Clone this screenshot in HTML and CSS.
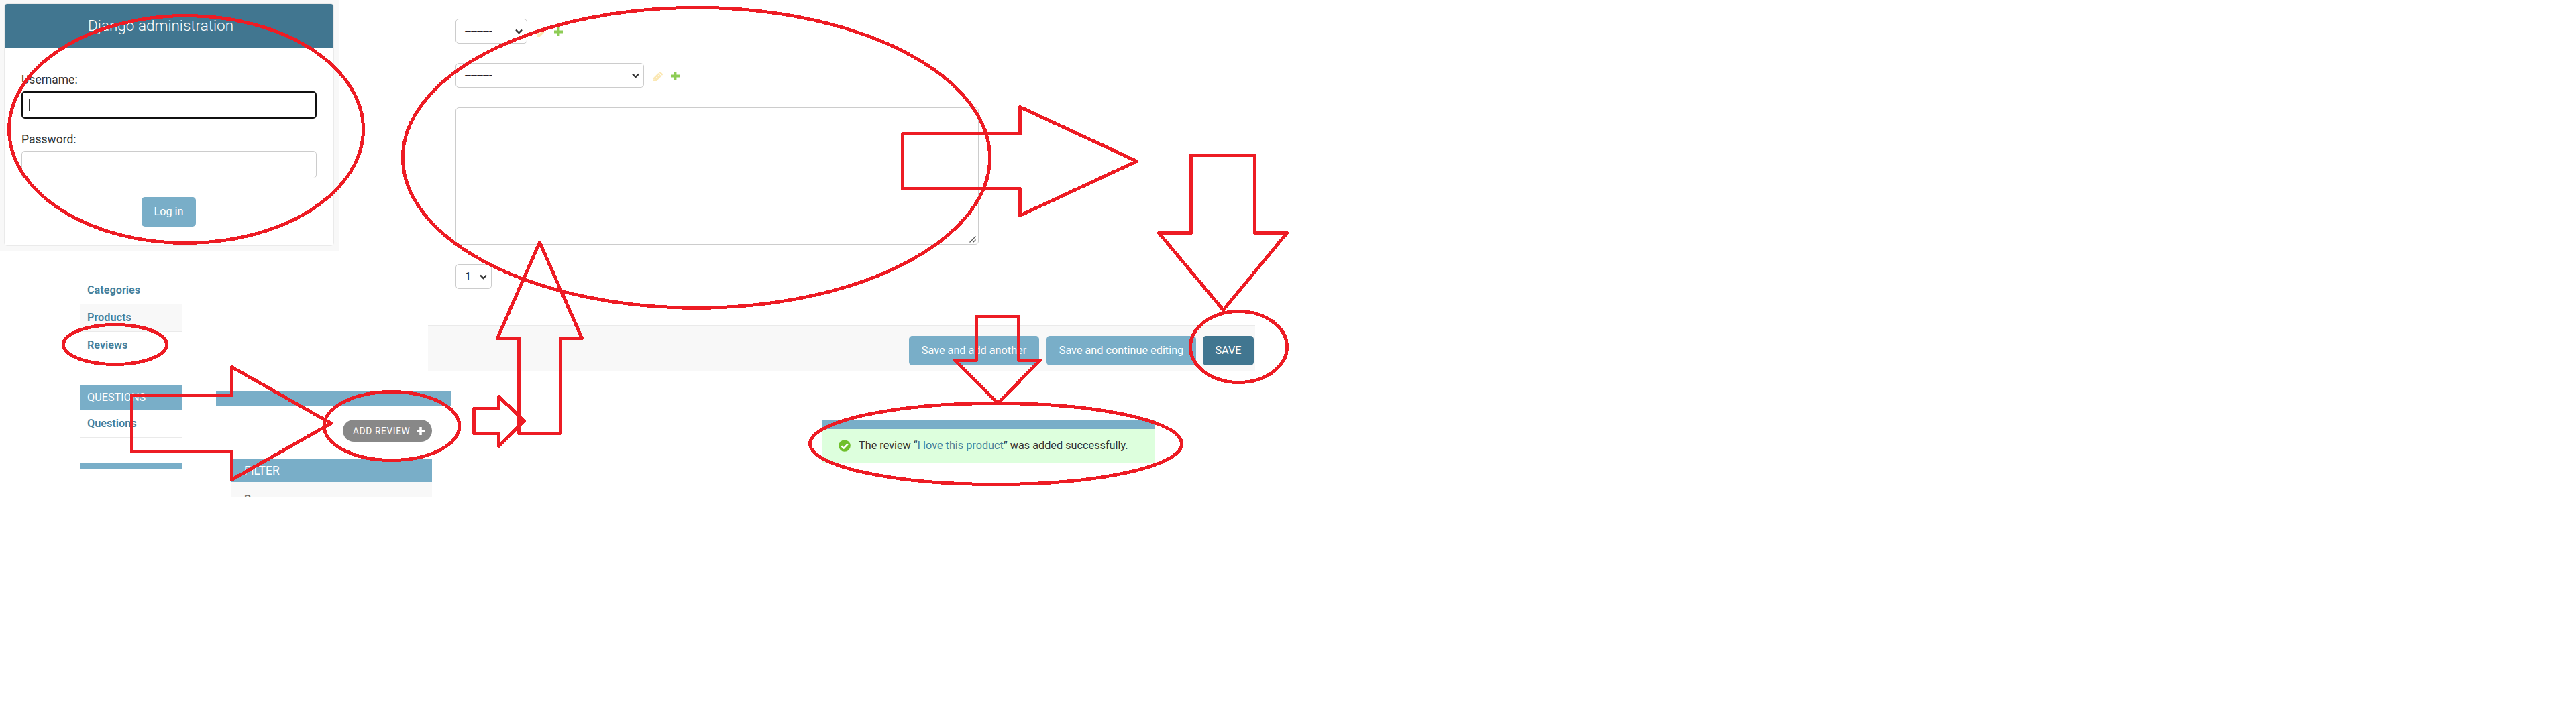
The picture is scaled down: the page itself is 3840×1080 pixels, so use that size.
FILE: index.html
```html
<!DOCTYPE html>
<html lang="en">
<head>
<meta charset="utf-8">
<title>Django administration: adding a review</title>
<link rel="stylesheet" href="styles.css">
</head>
<body>
<svg class="defs" width="0" height="0" aria-hidden="true">
  <symbol id="chevron" viewBox="0 0 11 8"><path d="M1 1.5 5.5 6 10 1.5" fill="none" stroke="#333" stroke-width="2.4"/></symbol>
  <symbol id="pencil" viewBox="0 0 14 14"><path d="M0 14V9.300L7.300 2l4.700 4.700L4.700 14zM8.200 1.100 9 .4q1-.8 2 0l2.600 2.600q.8 1 0 2l-.7.800z" fill="#fbe8b4"/><path d="M3.500 9.500 8 5" stroke="#fff" stroke-width=".7"/><path d="M1 11.500 2.500 13" stroke="#fff" stroke-width="1"/></symbol>
  <symbol id="plus" viewBox="0 0 13 13"><path d="M4.600 0h3.800v4.600H13v3.800H8.400V13H4.600V8.400H0V4.600h4.600z"/></symbol>
</svg>
<div class="board">
  <div class="left">
    <section class="login-page">
      <div class="login">
        <header class="login-header">Django administration</header>
        <form class="login-form">
          <label class="label">Username:</label>
          <div class="input input-focus"><span class="caret"></span></div>
          <label class="label label-next">Password:</label>
          <div class="input"></div>
          <div class="button login-button">Log in</div>
        </form>
      </div>
    </section>
    <div class="lists">
      <nav class="apps">
        <a class="model">Categories</a>
        <a class="model model-alt">Products</a>
        <a class="model">Reviews</a>
        <h2 class="caption">QUESTIONS</h2>
        <a class="model">Questions</a>
        <div class="caption-strip"></div>
      </nav>
      <section class="changelist">
        <div class="breadcrumbs"></div>
        <a class="add-link"><span>ADD REVIEW</span><svg class="add-icon"><use href="#plus"/></svg></a>
        <aside class="filter">
          <h2 class="filter-title">FILTER</h2>
          <h3 class="filter-by">By</h3>
        </aside>
      </section>
    </div>
  </div>
  <main class="right">
    <div class="row row-first">
      <div class="select select-product"><span>---------</span><svg class="chevron"><use href="#chevron"/></svg></div>
      <svg class="pencil"><use href="#pencil"/></svg><svg class="plus"><use href="#plus"/></svg>
    </div>
    <div class="row">
      <div class="select select-user"><span>---------</span><svg class="chevron"><use href="#chevron"/></svg></div>
      <svg class="pencil"><use href="#pencil"/></svg><svg class="plus"><use href="#plus"/></svg>
    </div>
    <div class="row row-text">
      <div class="textarea"><svg class="grip" viewBox="0 0 10 10"><path d="M.5 9.500 9.500.5M5.500 9.500l4-4" stroke="#555" stroke-width="1.300"/></svg></div>
    </div>
    <div class="row">
      <div class="select select-rate"><span>1</span><svg class="chevron"><use href="#chevron"/></svg></div>
    </div>
    <div class="submit-row">
      <div class="button add-another">Save and add another</div>
      <div class="button continue">Save and continue editing</div>
      <div class="button save">SAVE</div>
    </div>
    <div class="message">
      <div class="message-strip"></div>
      <p class="success"><svg class="tick" viewBox="0 0 18 18"><circle cx="9" cy="9" r="8.800" fill="#70bf2b"/><path d="M4.300 9.300 7.800 12.600 13.800 6.300" fill="none" stroke="#fff" stroke-width="2.500"/></svg><span>The review “<a class="link">I love this product</a>” was added successfully.</span></p>
    </div>
  </main>
</div>
<svg class="marks" width="3840" height="1080" viewBox="0 0 3840 1080">
  <ellipse cx="277.500" cy="193" rx="264" ry="169.500"/>
  <ellipse cx="171.500" cy="514" rx="77" ry="29.500"/>
  <ellipse cx="584" cy="635.500" rx="101" ry="51"/>
  <ellipse cx="1038" cy="235.300" rx="437.500" ry="224"/>
  <ellipse cx="1846.500" cy="517.500" rx="72" ry="53"/>
  <ellipse cx="1484.500" cy="662" rx="277" ry="60.500"/>
  <path d="M196.500 589.500H345.500V547.500L493.500 631.500 345.500 715.500V673.500H196.500z"/>
  <path d="M1345.500 199.500H1520.500V159.500L1694.500 240.500 1520.500 321.500V281.500H1345.500z"/>
  <path d="M1775.500 231.500H1870.500V347.500H1918.500L1823.500 462.500 1727.500 347.500H1775.500z"/>
  <path d="M773.500 646.500H835.500V504.500H867.500L804.500 361.500 741.500 504.500H773.500z"/>
  <path d="M706.500 609.500H743.500V591.500L781.500 628 743.500 665.500V646.500H706.500z"/>
  <path d="M1455.500 472.500H1518.500V537.500H1550.500L1487.500 601.500 1423.500 537.500H1455.500z"/>
</svg>
</body>
</html>
```
FILE: styles.css
```css
* { box-sizing: border-box; }
body {
  margin: 0;
  height: 1080px;
  position: relative;
  overflow: hidden;
  background: #fff;
  color: #333;
  font: 16.25px/20px Roboto, "Liberation Sans", sans-serif;
}
h2, h3, p { margin: 0; font-weight: 400; }
svg { display: block; flex: none; }
.defs { position: absolute; }
.board { display: flex; }
.left { width: 638px; flex: none; }
.right { width: 1233px; flex: none; }

.login-page { width: 506px; height: 375px; padding: 5px 0 0 6px; background: #f8f8f8; }
.login { width: 492px; height: 362px; border: 1px solid #eaeaea; border-radius: 5px; background: #fff; overflow: hidden; }
.login-header { height: 65px; padding-left: 124px; background: #417690; color: #fff; font-size: 22.5px; font-weight: 300; line-height: 65px; }
.login-form { display: flex; flex-direction: column; padding: 36px 25px 0; }
.label { height: 24px; margin-bottom: 5px; font-size: 17.5px; line-height: 24px; }
.label-next { margin-top: 19px; }
.input { display: flex; align-items: center; height: 41px; border: 1px solid #ccc; border-radius: 5px; }
.input-focus { border: 2px solid #101010; padding-left: 9px; }
.caret { width: 1px; height: 19px; background: #333; }
.button { height: 44px; border-radius: 5px; background: #79aec8; color: #fff; text-align: center; line-height: 44px; white-space: nowrap; }
.login-button { width: 81px; margin: 28px 0 0 179px; }

.lists { display: flex; gap: 50px; padding-left: 120px; }
.apps { width: 152px; flex: none; padding-top: 38px; }
.model { display: block; height: 41px; padding-left: 10px; border-bottom: 1px solid #eaeaea; color: #447e9b; font-weight: 600; line-height: 40px; }
.model-alt { background: #f8f8f8; }
.caption { height: 38px; margin-top: 38px; padding-left: 10px; background: #79aec8; color: #fff; font-size: 16.25px; line-height: 38px; }
.caption-strip { height: 8px; margin-top: 38px; background: #79aec8; }
.changelist { width: 350px; flex: none; padding-top: 209px; }
.breadcrumbs { height: 21px; background: #79aec8; }
.add-link { display: flex; align-items: center; justify-content: space-between; width: 133px; height: 33px; margin: 21px 0 26px 189px; padding: 0 11px 0 15px; border-radius: 17px; background: #888; color: #fff; font-size: 13.75px; letter-spacing: .62px; white-space: nowrap; }
.add-icon { width: 12px; height: 12px; fill: #fff; }
.filter { width: 300px; height: 56px; margin-left: 22px; background: #f8f8f8; overflow: hidden; }
.filter-title { height: 34px; padding-left: 20px; background: #79aec8; color: #fff; font-size: 17.5px; line-height: 34px; }
.filter-by { padding: 16px 0 0 20px; color: #666; font-size: 16.25px; font-weight: 500; line-height: 20px; }

.row { display: flex; height: 67px; padding: 13px 0 0 41px; border-bottom: 1px solid #eaeaea; }
.row-first { height: 81px; padding-top: 28px; }
.row-text { height: 233px; padding-top: 12px; }
.select { display: flex; justify-content: space-between; height: 37px; padding: 0 6px 0 13px; border: 1px solid #ccc; border-radius: 5px; color: #222; line-height: 35px; }
.select-product { width: 107px; }
.select-user { width: 281px; }
.select-rate { width: 54px; }
.chevron { width: 11px; height: 8px; margin-top: 14px; }
.pencil { width: 14px; height: 14px; margin: 13px 0 0 14px; }
.plus { width: 13px; height: 13px; margin: 13px 0 0 12px; fill: #8dcc55; }
.textarea { display: flex; align-items: flex-end; justify-content: flex-end; width: 780px; height: 205px; padding: 0 3px 2px 0; border: 1px solid #ccc; border-radius: 5px; }
.grip { width: 10px; height: 10px; }
.submit-row { display: flex; justify-content: flex-end; height: 69px; margin-top: 37px; padding: 15px 2px 0 0; border-top: 1px solid #eaeaea; background: #f8f8f8; }
.add-another { width: 194px; margin-right: 11px; }
.continue { width: 223px; margin-right: 10px; }
.save { width: 76px; background: #417690; }

.message { width: 496px; margin: 72px 0 0 588px; }
.message-strip { height: 14px; background: #79aec8; }
.success { display: flex; align-items: center; gap: 12px; height: 50px; padding-left: 24px; background: #dfd; white-space: nowrap; }
.tick { width: 18px; height: 18px; }
.link { color: #447e9b; }

.marks { position: absolute; top: 0; left: 0; fill: none; stroke: #ed1c24; stroke-width: 5; stroke-linejoin: round; shape-rendering: crispEdges; }
```
